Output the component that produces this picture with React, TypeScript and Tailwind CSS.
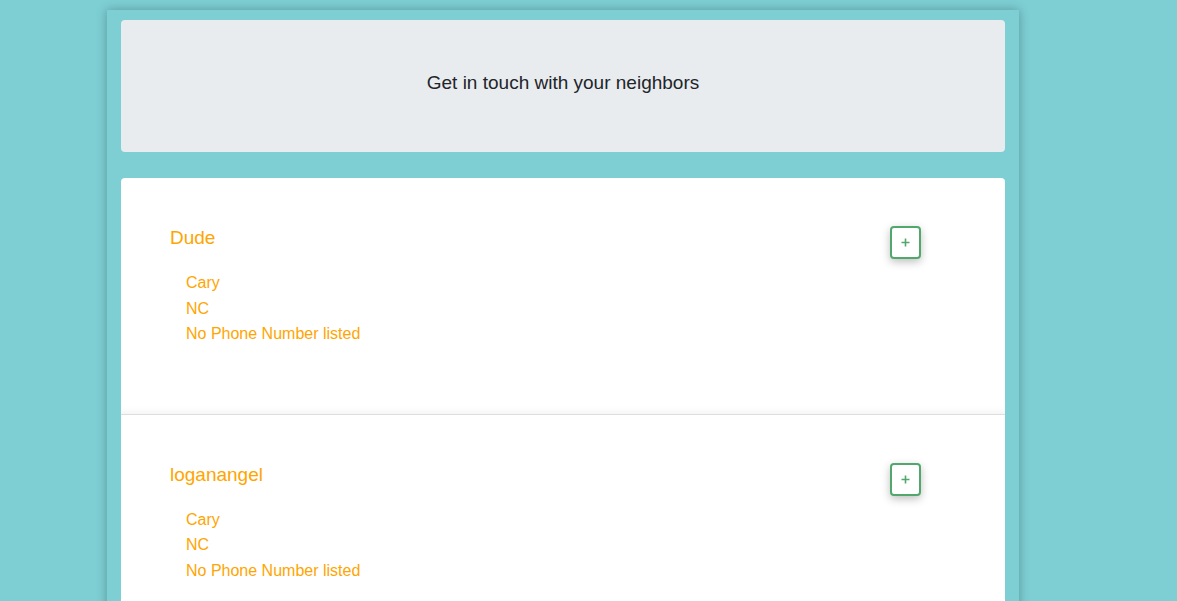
type Neighbor = {
    name: string;
    city: string;
    state: string;
    phone?: string;
};

const neighbors: Neighbor[] = [
    { name: 'Dude', city: 'Cary', state: 'NC' },
    { name: 'loganangel', city: 'Cary', state: 'NC' },
];

export default function App() {
    return (
        <div className="min-h-screen bg-[#7dcfd4] font-['Liberation_Sans',Arial,sans-serif]">
            <div className="ml-[107px] w-[912px] pt-[10px]">
                <div className="bg-[#7dcfd4] px-[14px] pt-[10px] pb-10 shadow-[0_0_10px_rgba(0,0,0,0.28)] min-h-[600px]">
                    {/* Header */}
                    <div className="h-[132px] rounded bg-[#e9ecef] flex items-center justify-center pb-[5px]">
                        <h1 className="text-[19px] text-[#212529]">Get in touch with your neighbors</h1>
                    </div>

                    {/* List */}
                    <div className="mt-[26px] rounded bg-white">
                        {neighbors.map((n, i) => (
                            <div
                                key={n.name}
                                className={`flex justify-between pl-[49px] pr-[84px] pt-[46px] pb-[67px] ${i < neighbors.length - 1 ? 'border-b border-[#dedede] shadow-[inset_0_-10px_10px_-10px_rgba(0,0,0,0.08)]' : ''}`}
                            >
                                <div>
                                    <h2 className="text-[19px] leading-[27px] text-[#ffa500]">{n.name}</h2>
                                    <div className="mt-[19px] pl-4 text-[16px] leading-[25.5px] text-[#ffa500]">
                                        <p>{n.city}</p>
                                        <p>{n.state}</p>
                                        <p>{n.phone || 'No Phone Number listed'}</p>
                                    </div>
                                </div>
                                <button className="mt-[2px] w-[31px] h-[33px] flex items-center justify-center rounded border-2 border-[#52a86c] bg-white shadow-[0_3px_8px_rgba(0,0,0,0.25)]">
                                    <svg width="9" height="9" viewBox="0 0 9 9">
                                        <path d="M4.5 0.5v8M0.5 4.5h8" stroke="#52a86c" strokeWidth="1.6" />
                                    </svg>
                                </button>
                            </div>
                        ))}
                    </div>
                </div>
            </div>
        </div>
    );
}
